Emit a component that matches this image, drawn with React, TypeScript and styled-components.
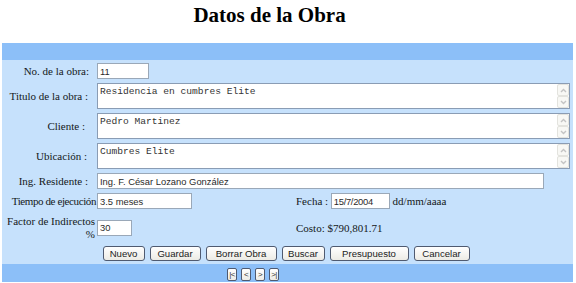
import React from 'react';
import styled, { createGlobalStyle } from 'styled-components';

const Global = createGlobalStyle`
  html, body { margin: 0; padding: 0; background: #fff; }
  body { font-family: "Liberation Serif", "Times New Roman", serif; }
`;

const Page = styled.div`
  width: 576px;
  padding: 0 3px 0 2px;
  box-sizing: border-box;
`;

const Title = styled.h1`
  margin: 0;
  height: 43px;
  box-sizing: border-box;
  padding: 5px 36px 0 0;
  font: bold 21px/21px "Liberation Serif", "Times New Roman", serif;
  text-align: center;
  color: #000;
`;

const Panel = styled.div`
  background: #c6e1fc;
`;

const Band = styled.div<{ $h: number }>`
  height: ${(p) => p.$h}px;
  background: #8cbff8;
  box-sizing: border-box;
`;

const NavBand = styled(Band)`
  display: flex;
  gap: 4px;
  padding: 4px 0 0 225px;
`;

const Form = styled.div`
  display: grid;
  grid-template-columns: 95px 199px 1fr;
  grid-template-rows: 16px 26px 26px 26px 16px 16px 29px 15px;
  row-gap: 4px;
  padding: 3px 3px 3px 0;
  align-items: center;
`;

const Label = styled.div<{ $pr?: number; $ls?: number }>`
  grid-column: 1;
  text-align: right;
  font-size: 11px;
  line-height: 13px;
  padding-right: ${(p) => p.$pr ?? 0}px;
  letter-spacing: ${(p) => p.$ls ?? 0}px;
  color: #141820;
  white-space: nowrap;
`;

const Wide = styled.div`
  grid-column: 2 / 4;
  display: flex;
  align-items: center;
`;

const Cell = styled.div<{ $col: number; $pl?: number }>`
  grid-column: ${(p) => p.$col};
  display: flex;
  align-items: center;
  padding-left: ${(p) => p.$pl ?? 0}px;
  font-size: 11px;
  color: #141820;
  white-space: nowrap;
`;

const Field = styled.input<{ $w: number; $narrow?: boolean }>`
  width: ${(p) => p.$w}px;
  height: 16px;
  box-sizing: border-box;
  margin: 0;
  border: 1px solid #9aa8b8;
  padding: 0 2px;
  font-family: ${(p) => (p.$narrow ? '"Liberation Sans Narrow", "Liberation Sans", Arial, sans-serif' : '"Liberation Sans", Arial, sans-serif')};
  font-size: 9.4px;
  letter-spacing: ${(p) => (p.$narrow ? '-0.3px' : '0')};
  color: #2a2a2a;
  background: #fff;
  outline: none;
`;

const AreaBox = styled.div`
  grid-column: 2 / 4;
  height: 26px;
  display: flex;
  border: 1px solid #8a9cb4;
  background: #fff;
  box-sizing: border-box;
`;

const AreaText = styled.textarea`
  flex: 1;
  border: none;
  resize: none;
  margin: 0;
  padding: 2px 2px;
  font: 9.6px/11px "Liberation Mono", "Courier New", monospace;
  color: #333;
  background: transparent;
  overflow: hidden;
  outline: none;
`;

const ScrollCol = styled.div`
  width: 12px;
  display: flex;
  flex-direction: column;
  justify-content: space-between;
  background: #fcfcfa;
`;

const ArrowBtn = styled.div`
  height: 12px;
  border: 1px solid #e3e3de;
  border-radius: 2px;
  box-sizing: border-box;
  display: flex;
  align-items: center;
  justify-content: center;
  background: #f8f8f5;
`;

const Buttons = styled.div`
  grid-column: 1 / 4;
  display: flex;
  justify-content: center;
  gap: 5px;
`;

const Btn = styled.button<{ $w: number }>`
  width: ${(p) => p.$w}px;
  height: 15px;
  padding: 0;
  margin: 0;
  border: 1px solid #4f5a70;
  border-radius: 3px;
  background: linear-gradient(#ffffff, #ecebe5);
  font: 9.6px/13px "Liberation Sans", Arial, sans-serif;
  color: #222;
`;

const NavBtn = styled.button`
  width: 10px;
  height: 13px;
  padding: 0;
  margin: 0;
  border: 1px solid #4f5a70;
  border-radius: 2px;
  background: linear-gradient(#ffffff, #ecebe5);
  font: 8px/11px "Liberation Sans", Arial, sans-serif;
  color: #333;
  letter-spacing: -0.5px;
`;

const Chevron = ({ up }: { up?: boolean }) => (
  <svg width="7" height="5" viewBox="0 0 7 5">
    <path
      d={up ? 'M1 4 L3.5 1.5 L6 4' : 'M1 1 L3.5 3.5 L6 1'}
      stroke="#c4c4c4"
      strokeWidth="1.4"
      fill="none"
    />
  </svg>
);

const Area = ({ value }: { value: string }) => (
  <AreaBox>
    <AreaText defaultValue={value} readOnly />
    <ScrollCol>
      <ArrowBtn>
        <Chevron up />
      </ArrowBtn>
      <ArrowBtn>
        <Chevron />
      </ArrowBtn>
    </ScrollCol>
  </AreaBox>
);

const buttons: [string, number][] = [
  ['Nuevo', 42],
  ['Guardar', 51],
  ['Borrar Obra', 71],
  ['Buscar', 43],
  ['Presupuesto', 79],
  ['Cancelar', 56],
];

export default function App() {
  return (
    <Page>
      <Global />
      <Title>Datos de la Obra</Title>
      <Panel>
        <Band $h={17} />
        <Form>
          <Label $pr={8}>No. de la obra:</Label>
          <Wide>
            <Field $w={52} defaultValue="11" />
          </Wide>

          <Label $pr={9}>Titulo de la obra :</Label>
          <Area value="Residencia en cumbres Elite" />

          <Label $pr={12}>Cliente :</Label>
          <Area value="Pedro Martinez" />

          <Label $pr={10}>Ubicación :</Label>
          <Area value="Cumbres Elite" />

          <Label $pr={9}>Ing. Residente :</Label>
          <Wide>
            <Field $w={447} defaultValue="Ing. F. César Lozano González" />
          </Wide>

          <Label $pr={1} $ls={-0.4}>Tiempo de ejecución</Label>
          <Cell $col={2}>
            <Field $w={95} defaultValue="3.5 meses" />
          </Cell>
          <Cell $col={3}>
            Fecha :&nbsp;
            <Field $w={59} $narrow defaultValue="15/7/2004" />
            &nbsp;dd/mm/aaaa
          </Cell>

          <Label $pr={2}>
            Factor de Indirectos
            <br />%
          </Label>
          <Cell $col={2}>
            <Field $w={35} defaultValue="30" />
          </Cell>
          <Cell $col={3}>Costo: $790,801.71</Cell>

          <Buttons>
            {buttons.map(([t, w]) => (
              <Btn key={t} $w={w}>
                {t}
              </Btn>
            ))}
          </Buttons>
        </Form>
        <NavBand $h={18}>
          <NavBtn>|&lt;</NavBtn>
          <NavBtn>&lt;</NavBtn>
          <NavBtn>&gt;</NavBtn>
          <NavBtn>&gt;|</NavBtn>
        </NavBand>
      </Panel>
    </Page>
  );
}
